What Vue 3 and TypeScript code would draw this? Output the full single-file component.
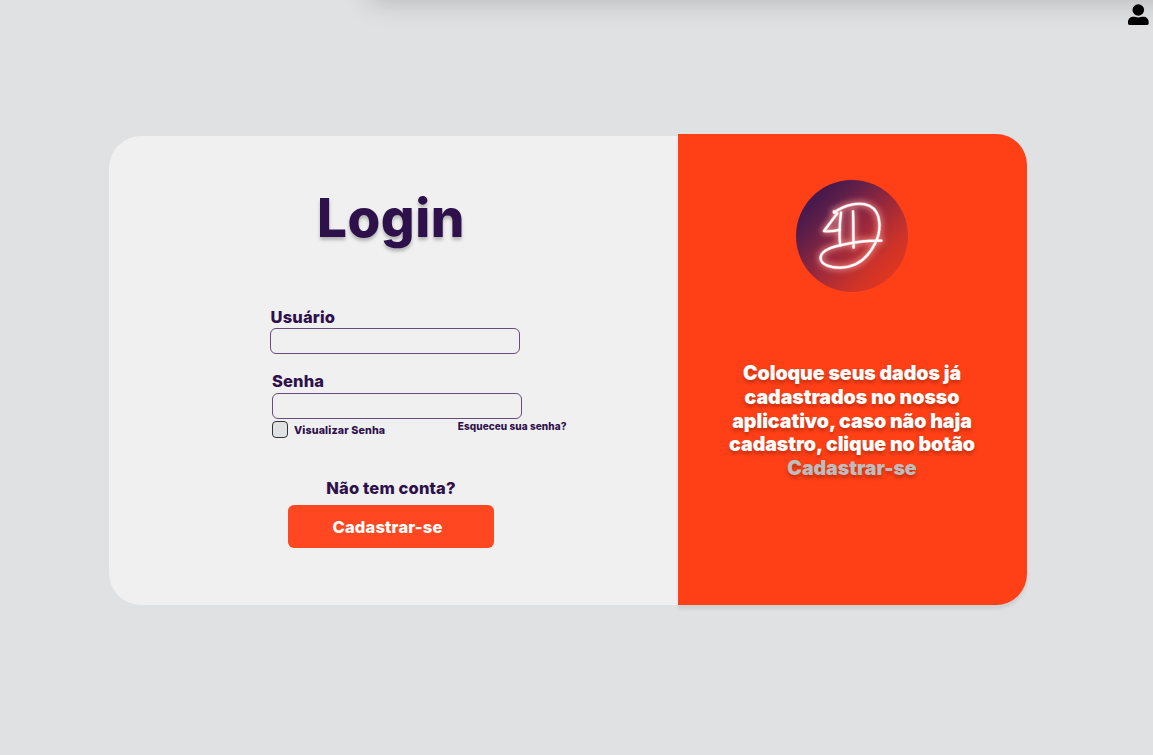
<script setup lang="ts">
import { ref } from 'vue'

const username = ref<string>('')
const password = ref<string>('')
const showPassword = ref<boolean>(false)

const instructions: string[] = [
  'Coloque seus dados já',
  'cadastrados no nosso',
  'aplicativo, caso não haja',
  'cadastro, clique no botão',
]
</script>

<template>
  <div class="page">
    <header class="topbar">
      <svg class="user-icon" viewBox="0 0 21 21" aria-label="Conta">
        <circle cx="10.3" cy="6" r="5.8" />
        <path d="M0 18.3C0 14.8 2.3 12.8 5.6 12.8C7 12.8 8.3 13.4 10.3 13.4S13.6 12.8 15 12.8C18.4 12.8 20.7 14.8 20.7 18.3V19.6Q20.7 20.9 19.2 20.9H1.5Q0 20.9 0 19.6Z" />
      </svg>
    </header>

    <main class="card">
      <form class="login" @submit.prevent>
        <h1>Login</h1>
        <div class="field">
          <label for="user">Usuário</label>
          <input id="user" v-model="username" class="box" type="text" />
        </div>
        <div class="field field-password">
          <label for="pass">Senha</label>
          <input id="pass" v-model="password" class="box" :type="showPassword ? 'text' : 'password'" />
        </div>
        <div class="options">
          <label class="reveal">
            <input v-model="showPassword" class="check" type="checkbox" />
            <span>Visualizar Senha</span>
          </label>
          <a class="forgot">Esqueceu sua senha?</a>
        </div>
        <p class="question">Não tem conta?</p>
        <button class="register" type="button">Cadastrar-se</button>
      </form>

      <aside class="panel">
        <svg class="logo" viewBox="48 45 336 336">
          <defs>
            <linearGradient id="disc" x1="0.1" y1="0.12" x2="0.88" y2="0.9">
              <stop offset="0" stop-color="#3e164f" />
              <stop offset="0.22" stop-color="#5d1f49" />
              <stop offset="0.5" stop-color="#98283c" />
              <stop offset="0.8" stop-color="#cf3328" />
              <stop offset="1" stop-color="#e2371f" />
            </linearGradient>
            <filter id="glow" x="-40%" y="-40%" width="180%" height="180%">
              <feGaussianBlur stdDeviation="9" />
            </filter>
            <g id="mark" fill="none" stroke-linecap="round" stroke-linejoin="round">
              <path d="M162 143C194 119 239 109 268 122C306 140 304 198 286 234C265 277 231 306 183 308C151 309 119 298 122 276C126 253 162 245 190 239C225 231 263 226 304 227" />
              <path d="M162 139L172 145L132 198C148 200 165 198 180 194M183 143C179 176 176 208 181 242M219 139C221 176 219 212 221 248" />
            </g>
          </defs>
          <circle cx="216" cy="213" r="168" fill="url(#disc)" />
          <use href="#mark" stroke="#ff9d9a" stroke-width="15" filter="url(#glow)" opacity="0.8" />
          <use href="#mark" stroke="#ffd9d5" stroke-width="10" opacity="0.5" />
          <use href="#mark" stroke="#fff" stroke-width="6.5" />
        </svg>
        <p class="message">
          <span v-for="line in instructions" :key="line">{{ line }}</span>
          <span class="accent">Cadastrar-se</span>
        </p>
      </aside>
    </main>
  </div>
</template>

<style>
body {
  margin: 0;
  background: #dfe1e3;
}
</style>

<style scoped>
.page {
  box-sizing: border-box;
  width: 1153px;
  height: 755px;
  overflow: hidden;
  background: #dfe1e3;
  color: #2e114b;
  font-family: Inter, "Liberation Sans", sans-serif;
}

.topbar {
  position: relative;
  display: flex;
  justify-content: flex-end;
  box-sizing: border-box;
  height: 134px;
  padding: 4px 4.5px 0 0;
}

.topbar::before {
  content: "";
  position: absolute;
  top: -43px;
  left: 369px;
  right: -40px;
  height: 40px;
  box-shadow: 0 4px 28px rgba(0, 0, 0, 0.2);
}

.user-icon {
  position: relative;
  width: 21px;
  height: 21px;
}

.card {
  display: flex;
  align-items: flex-start;
  width: 917.5px;
  margin-left: 109px;
}

.login {
  box-sizing: border-box;
  width: 568.5px;
  height: 469.5px;
  margin-top: 1.5px;
  padding: 50.5px 0 0 161px;
  border-radius: 32px 0 0 32px;
  background: #f0f0f0;
}

h1 {
  width: 242px;
  margin: 0;
  font-size: 53px;
  font-weight: 800;
  line-height: 64px;
  letter-spacing: 0.5px;
  text-align: center;
  text-shadow: 0 3px 3.5px rgba(0, 0, 0, 0.25);
}

.field {
  display: flex;
  flex-direction: column;
  width: 250px;
  margin-top: 57px;
  font-size: 16.5px;
  font-weight: 800;
  line-height: 20px;
  letter-spacing: 0.15px;
}

.field-password {
  margin: 17px 0 0 2px;
}

.field label {
  margin-left: 0.5px;
}

.field-password label {
  margin-left: 0;
}

.box {
  box-sizing: border-box;
  width: 250px;
  height: 26.5px;
  margin-top: 0.5px;
  padding: 0 8px;
  border: 1px solid #664c81;
  border-radius: 6px;
  outline: none;
  background: transparent;
  color: inherit;
  font: 500 14px Inter, sans-serif;
}

.field-password .box {
  margin-top: 1.5px;
}

.options {
  display: flex;
  width: 296px;
  height: 20px;
  margin: 1px 0 0 2px;
  font-size: 10.7px;
  font-weight: 800;
  line-height: 16px;
}

.reveal {
  display: flex;
  align-items: center;
  gap: 6px;
  height: 18px;
}

.reveal span {
  padding-top: 3px;
  letter-spacing: 0.13px;
}

.check {
  appearance: none;
  box-sizing: border-box;
  width: 16px;
  height: 17px;
  margin: 0;
  border: 1px solid #333;
  border-radius: 4px;
  background: #dfe1e3;
}

.check:checked {
  background: #2e114b;
}

.forgot {
  margin: -2px 1.5px 0 auto;
  font-size: 10px;
  letter-spacing: 0.07px;
}

.question {
  width: 242px;
  margin: 38px 0 0;
  font-size: 16.5px;
  font-weight: 800;
  line-height: 20px;
  letter-spacing: 0.15px;
  text-align: center;
}

.register {
  display: block;
  box-sizing: border-box;
  width: 206px;
  height: 43px;
  margin: 7px 0 0 18px;
  padding: 0 7px 0 0;
  border: 0;
  border-radius: 6px;
  background: #ff4822;
  color: #fff;
  font: 800 16.5px Inter, sans-serif;
  letter-spacing: 0.2px;
}

.panel {
  display: flex;
  flex-direction: column;
  align-items: center;
  box-sizing: border-box;
  width: 349px;
  height: 471px;
  padding-top: 46px;
  border-radius: 0 31px 31px 0;
  background: #ff3f16;
  box-shadow: 0 3.5px 3.5px rgba(0, 0, 0, 0.08);
}

.logo {
  width: 112px;
  height: 112px;
}

.message {
  display: flex;
  flex-direction: column;
  width: 349px;
  margin: 70.4px 0 0;
  color: #fff;
  font-size: 19.6px;
  font-weight: 900;
  line-height: 23.6px;
  letter-spacing: -0.08px;
  text-align: center;
  text-shadow: 0 3px 3.5px rgba(0, 0, 0, 0.23);
}

.accent {
  color: #bdbdbd;
}
</style>
